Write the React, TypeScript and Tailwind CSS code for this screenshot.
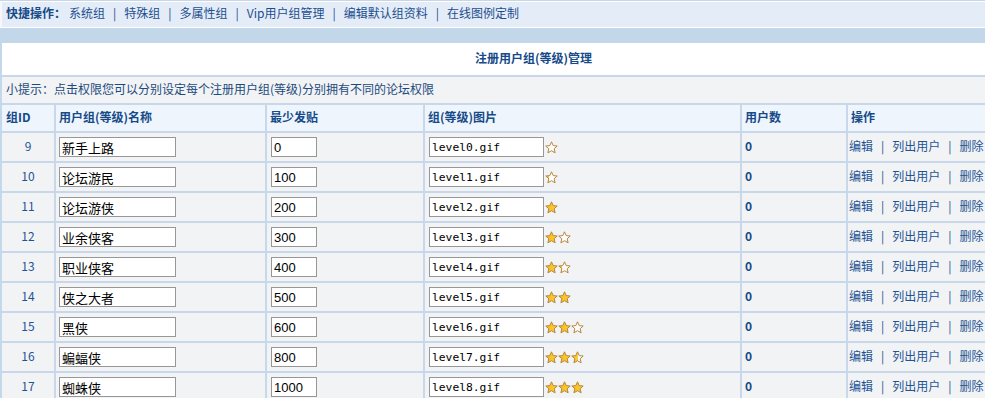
import React from "react";

const rows = [
  { id: 9, name: "新手上路", posts: "0", img: "level0.gif", stars: [0] },
  { id: 10, name: "论坛游民", posts: "100", img: "level1.gif", stars: [0.3] },
  { id: 11, name: "论坛游侠", posts: "200", img: "level2.gif", stars: [1] },
  { id: 12, name: "业余侠客", posts: "300", img: "level3.gif", stars: [1, 0] },
  { id: 13, name: "职业侠客", posts: "400", img: "level4.gif", stars: [1, 0.3] },
  { id: 14, name: "侠之大者", posts: "500", img: "level5.gif", stars: [1, 1] },
  { id: 15, name: "黑侠", posts: "600", img: "level6.gif", stars: [1, 1, 0] },
  { id: 16, name: "蝙蝠侠", posts: "800", img: "level7.gif", stars: [1, 1, 0.5] },
  { id: 17, name: "蜘蛛侠", posts: "1000", img: "level8.gif", stars: [1, 1, 1] },
];

const STAR = "M6.5 0.8 L8.2 4.6 L12.2 5 L9.2 7.7 L10.1 11.8 L6.5 9.7 L2.9 11.8 L3.8 7.7 L0.8 5 L4.8 4.6 Z";

function Star({ fill, k }: { fill: number; k: string }) {
  const id = `g${k}`;
  return (
    <svg width="13" height="13" viewBox="0 0 13 13" className="block">
      <defs>
        <linearGradient id={id} x1="0" x2="1" y1="0" y2="0">
          <stop offset="0" stopColor="#f7b91c" />
          <stop offset={fill} stopColor="#f9cf3a" />
          <stop offset={fill} stopColor="#ffffff" />
          <stop offset="1" stopColor="#ffffff" />
        </linearGradient>
      </defs>
      <path d={STAR} fill={fill === 0 ? "#ffffff" : `url(#${id})`} stroke="#b8863e" strokeWidth="1" strokeLinejoin="round" />
    </svg>
  );
}

const font = "font-['Noto_Sans_CJK_SC','Noto_Sans',sans-serif]";
const bd = "border-[#c8d8ea]";

export default function App() {
  const quick = ["系统组", "特殊组", "多属性组", "Vip用户组管理", "编辑默认组资料", "在线图例定制"];
  return (
    <div className={`w-[985px] h-[398px] overflow-hidden bg-white text-[12px] leading-none ${font}`}>
      {/* quick bar */}
      <div className="border-t border-[#c7d6e6] pt-px">
        <div className="h-[25px] bg-[#e4ecf8] border-l-2 border-[#f4f7fb] flex items-center pl-[4px] pb-[3px] text-[#1c4f8e]">
          <span className="font-bold text-[#164a88] mr-[3px]">快捷操作：</span>
          {quick.map((q, i) => (
            <React.Fragment key={q}>
              {i > 0 && <span className="mx-[8px] text-[#1c4f8e]">|</span>}
              <span>{q}</span>
            </React.Fragment>
          ))}
        </div>
      </div>
      <div className="h-px bg-white" />
      <div className="h-[15px] bg-[#c3d7eb]" />
      <div className="border-l-2 border-[#c4d8ec]">
        <table className="w-[983px] border-collapse table-fixed">
          <colgroup>
            <col className="w-[53px]" />
            <col className="w-[211px]" />
            <col className="w-[158px]" />
            <col className="w-[317px]" />
            <col className="w-[106px]" />
            <col className="w-[138px]" />
          </colgroup>
          <tbody>
            <tr className="h-[33px] bg-white">
              <td colSpan={6} className={`text-center pl-[80px] pb-[3px] font-bold text-[#164a88] border-b-2 ${bd}`}>
                注册用户组(等级)管理
              </td>
            </tr>
            <tr className="h-[28px] bg-[#f1f3f5]">
              <td colSpan={6} className={`pl-[4px] pb-[3px] text-[#1d4a7c] border-b-2 ${bd}`}>
                小提示：点击权限您可以分别设定每个注册用户组(等级)分别拥有不同的论坛权限
              </td>
            </tr>
            <tr className="h-[28px] bg-[#eef5fd] font-bold text-[#164a88]">
              <td className={`pl-[4px] pb-[3px] border-r-2 border-b-2 ${bd}`}>组ID</td>
              <td className={`pl-[3px] pb-[3px] border-r-2 border-b-2 ${bd}`}>用户组(等级)名称</td>
              <td className={`pl-[3px] pb-[3px] border-r-2 border-b-2 ${bd}`}>最少发贴</td>
              <td className={`pl-[3px] pb-[3px] border-r-2 border-b-2 ${bd}`}>组(等级)图片</td>
              <td className={`pl-[3px] pb-[3px] border-r-2 border-b-2 ${bd}`}>用户数</td>
              <td className={`pl-[3px] pb-[3px] border-b-2 ${bd}`}>操作</td>
            </tr>
            {rows.map((r) => (
              <tr key={r.id} className="h-[30px] bg-[#f1f3f5]">
                <td className={`text-center pb-[3px] text-[#1f5494] border-r-2 border-b-2 ${bd}`}>{r.id}</td>
                <td className={`pl-[3px] border-r-2 border-b-2 ${bd}`}>
                  <input
                    readOnly
                    value={r.name}
                    className={`block w-[117px] h-[20px] border border-[#979797] bg-white px-[2px] text-[13px] text-black outline-none ${font}`}
                  />
                </td>
                <td className={`pl-[4px] border-r-2 border-b-2 ${bd}`}>
                  <input
                    readOnly
                    value={r.posts}
                    className="block w-[46px] h-[20px] border border-[#979797] bg-white px-[2px] text-[13px] text-black outline-none font-['Liberation_Sans',sans-serif]"
                  />
                </td>
                <td className={`pl-[4px] border-r-2 border-b-2 ${bd}`}>
                  <div className="flex items-center gap-[1px]">
                    <input
                      readOnly
                      value={r.img}
                      className="block w-[115px] h-[20px] border border-[#979797] bg-white px-[2px] text-[11.3px] text-black outline-none font-['DejaVu_Sans_Mono',monospace]"
                    />
                    <div className="flex">
                      {r.stars.map((s, i) => (
                        <Star key={i} fill={s} k={`${r.id}-${i}`} />
                      ))}
                    </div>
                  </div>
                </td>
                <td className={`pl-[3px] pb-[3px] font-bold text-[#164a88] border-r-2 border-b-2 ${bd}`}>0</td>
                <td className={`pl-[1px] pb-[3px] text-[#1f5494] border-b-2 ${bd} whitespace-nowrap`}>
                  编辑<span className="mx-[8px]">|</span>列出用户<span className="mx-[8px]">|</span>删除
                </td>
              </tr>
            ))}
          </tbody>
        </table>
      </div>
    </div>
  );
}
